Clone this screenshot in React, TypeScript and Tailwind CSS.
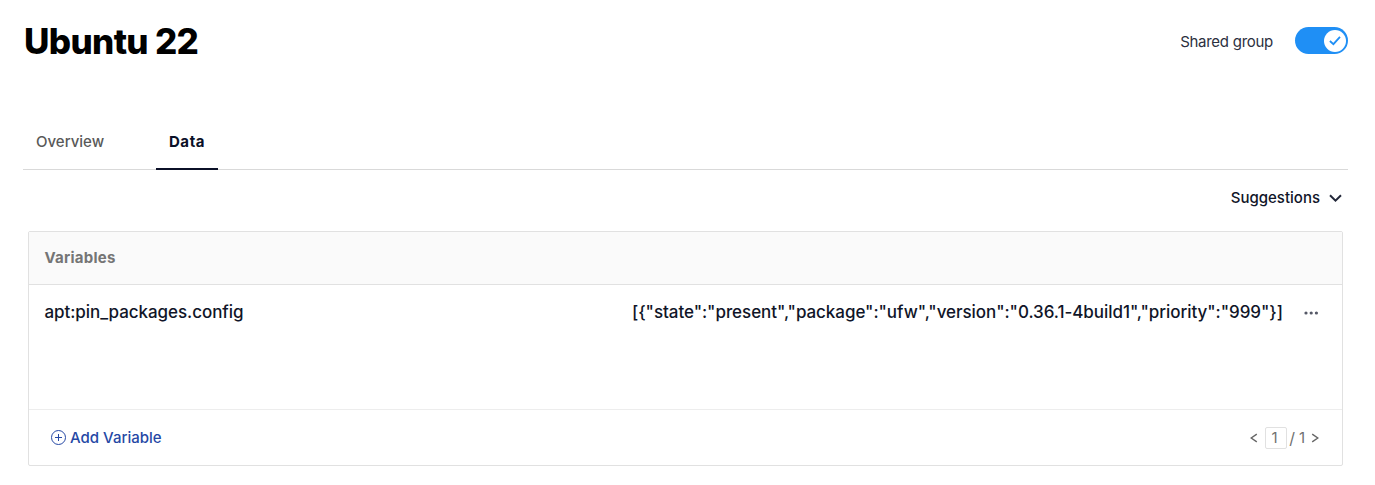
import React from 'react';

function Toggle() {
  return (
    <button
      type="button"
      role="switch"
      aria-checked="true"
      aria-label="Shared group"
      className="flex h-[27px] w-[53px] items-center justify-end rounded-full bg-[#1f8ff5] pr-[2px]"
    >
      <span className="flex h-[22px] w-[22px] items-center justify-center rounded-full bg-white">
        <svg width="12" height="12" viewBox="0 0 12 12" fill="none" stroke="#1f8ff5" strokeWidth="1.8">
          <path d="M0.9 6 4.4 9.2 11 1.8" />
        </svg>
      </span>
    </button>
  );
}

function Header() {
  return (
    <header className="flex h-[82px] items-center justify-between pr-[27px] pl-6">
      <h1 className="text-[35px] leading-[42px] font-extrabold tracking-[-0.65px] whitespace-nowrap text-black">
        Ubuntu 22
      </h1>
      <div className="flex items-center gap-[22px] pb-px">
        <span className="pt-[3px] text-[15px] tracking-[-0.27px] text-[#2c3040]">Shared group</span>
        <Toggle />
      </div>
    </header>
  );
}

function Tabs() {
  return (
    <nav className="mt-8 mr-[27px] ml-[23px] flex h-14 items-stretch gap-10 border-b border-[#d9d9d9]">
      <button
        type="button"
        className="w-[93px] pt-[2px] pl-[13px] text-left text-[15px] font-medium text-[#595959]"
      >
        Overview
      </button>
      <button
        type="button"
        className="-mb-px w-[62px] border-b-2 border-[#0b1027] pt-[2px] text-center text-[15px] font-bold tracking-[0.6px] text-[#0b1027]"
      >
        Data
      </button>
    </nav>
  );
}

function Pager() {
  return (
    <div className="flex items-center text-[15px] text-[#707070]">
      <svg width="8" height="10" viewBox="0 0 8 10" fill="none" stroke="#666" strokeWidth="1.4">
        <path d="M6.8 1.2 1.2 5 6.8 8.8" />
      </svg>
      <span className="ml-[7px] flex h-[22px] w-[22px] items-center justify-center rounded-[2px] border border-[#e1e1e1] pt-px pr-[3px]">
        1
      </span>
      <span className="ml-[2px] pt-px text-[16px]">/</span>
      <span className="ml-[4px] pt-px">1</span>
      <svg className="ml-[6px]" width="8" height="10" viewBox="0 0 8 10" fill="none" stroke="#666" strokeWidth="1.4">
        <path d="M1.2 1.2 6.8 5 1.2 8.8" />
      </svg>
    </div>
  );
}

function VariablesTable() {
  return (
    <section className="mr-8 ml-7 rounded-[2px] border border-[#e1e1e1]">
      <div className="flex h-[53px] items-center border-b border-[#e1e1e1] bg-[#fafafa] pl-[15.5px] text-[15px] font-bold tracking-[0.25px] text-[#757575]">
        Variables
      </div>
      <div className="flex h-[125px] items-start justify-between border-b border-[#ededed] pt-[14px] pr-[23px] pl-[15.5px] text-[17px] leading-[26px] font-medium text-[#101528]">
        <span className="tracking-[-0.06px]">apt:pin_packages.config</span>
        <div className="flex items-center gap-[21px]">
          <span className="tracking-[-0.05px] whitespace-nowrap">
            {'[{"state":"present","package":"ufw","version":"0.36.1-4build1","priority":"999"}]'}
          </span>
          <svg className="mt-[2px]" width="15" height="4" viewBox="0 0 15 4" fill="#555967">
            <circle cx="2" cy="2" r="1.6" />
            <circle cx="7.2" cy="2" r="1.6" />
            <circle cx="12.4" cy="2" r="1.6" />
          </svg>
        </div>
      </div>
      <div className="flex h-[55px] items-center justify-between pr-[23px] pl-[22px]">
        <button type="button" className="flex items-center gap-1 text-[15px] font-medium text-[#2548a5]">
          <svg width="15" height="15" viewBox="0 0 15 15" fill="none" stroke="#2548a5" strokeWidth="1">
            <circle cx="7.5" cy="7.5" r="7" />
            <path d="M4 7.5h7M7.5 4v7" />
          </svg>
          <span className="pt-[2px]">Add Variable</span>
        </button>
        <Pager />
      </div>
    </section>
  );
}

export default function App() {
  return (
    <main className="h-[485px] w-[1375px] overflow-hidden bg-white font-['Inter',sans-serif]">
      <Header />
      <Tabs />
      <div className="flex h-[61px] justify-end pt-[17px] pr-[33px]">
        <button type="button" className="flex h-[22px] items-center gap-[9px] text-[15px] font-medium text-[#101528]">
          Suggestions
          <svg width="13" height="8" viewBox="0 0 13 8" fill="none" stroke="#23283a" strokeWidth="2">
            <path d="M1 1.2 6.5 6.6 12 1.2" />
          </svg>
        </button>
      </div>
      <VariablesTable />
    </main>
  );
}
